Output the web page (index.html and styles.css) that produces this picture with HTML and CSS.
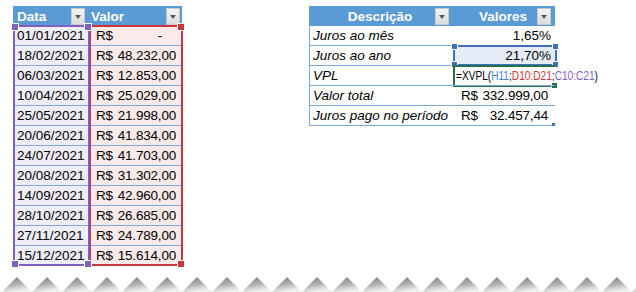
FILE: index.html
```html
<!DOCTYPE html>
<html>
<head>
<meta charset="utf-8">
<link rel="stylesheet" href="styles.css">
</head>
<body>
<div class="page">
  <div class="sheet">
    <div class="ltbl">
      <div class="h h-data"><span>Data</span><i class="dd"></i></div>
      <div class="h h-valor"><span>Valor</span><i class="dd"></i></div>

      <div class="c d">01/01/2021</div><div class="c v"><span>R$</span><span class="dash">-</span></div>
      <div class="c d">18/02/2021</div><div class="c v"><span>R$</span><span>48.232,00</span></div>
      <div class="c d">06/03/2021</div><div class="c v"><span>R$</span><span>12.853,00</span></div>
      <div class="c d">10/04/2021</div><div class="c v"><span>R$</span><span>25.029,00</span></div>
      <div class="c d">25/05/2021</div><div class="c v"><span>R$</span><span>21.998,00</span></div>
      <div class="c d">20/06/2021</div><div class="c v"><span>R$</span><span>41.834,00</span></div>
      <div class="c d">24/07/2021</div><div class="c v"><span>R$</span><span>41.703,00</span></div>
      <div class="c d">20/08/2021</div><div class="c v"><span>R$</span><span>31.302,00</span></div>
      <div class="c d">14/09/2021</div><div class="c v"><span>R$</span><span>42.960,00</span></div>
      <div class="c d">28/10/2021</div><div class="c v"><span>R$</span><span>26.685,00</span></div>
      <div class="c d">27/11/2021</div><div class="c v"><span>R$</span><span>24.789,00</span></div>
      <div class="c d">15/12/2021</div><div class="c v"><span>R$</span><span>15.614,00</span></div>

      <div class="sel sel-red">
        <i class="hd hd-tr red"></i><i class="hd hd-br red"></i>
      </div>
      <div class="sel sel-purple">
        <i class="hd hd-tl purple"></i><i class="hd hd-tr purple"></i>
        <i class="hd hd-bl purple"></i><i class="hd hd-br purple"></i>
      </div>
    </div>

    <div class="rtbl">
      <div class="h h-c"><i class="sp"></i><span>Descrição</span><i class="dd"></i></div>
      <div class="h h-c"><i class="sp"></i><span>Valores</span><i class="dd"></i></div>

      <div class="c k">Juros ao mês</div><div class="c n">1,65%</div>
      <div class="c k">Juros ao ano</div><div class="c n h11">21,70%</div>
      <div class="c k">VPL</div><div class="c f"><span class="ftext">=XVPL(<span class="rb">H11</span>;<span class="rr">D10:D21</span>;<span class="rp">C10:C21</span>)</span></div>
      <div class="c k">Valor total</div><div class="c acc"><span>R$</span><span>332.999,00</span></div>
      <div class="c k">Juros pago no período</div><div class="c acc"><span>R$</span><span>32.457,44</span></div>

      <div class="sel sel-blue">
        <i class="hd hd-tl blue"></i><i class="hd hd-tr blue"></i>
        <i class="hd hd-bl blue"></i><i class="hd hd-br blue"></i>
      </div>
      <div class="sel sel-green"><i class="hd hd-br green"></i></div>
      <i class="resize"></i>
    </div>
  </div>

  <svg class="zig" width="636" height="17" viewBox="0 0 636 17">
    <defs>
      <linearGradient id="g" x1="0" y1="0" x2="0.35" y2="1">
        <stop offset="0" stop-color="#7a7a7a"/>
        <stop offset="0.55" stop-color="#adadad"/>
        <stop offset="1" stop-color="#efefef"/>
      </linearGradient>
      <pattern id="tri" width="30" height="17" patternUnits="userSpaceOnUse" x="2" y="0">
        <polygon points="0,17 15,2 30,17" fill="url(#g)"/>
      </pattern>
    </defs>
    <rect x="0" y="0" width="636" height="17" fill="url(#tri)"/>
  </svg>
</div>
</body>
</html>
```
FILE: styles.css
```css
html, body {
  margin: 0;
  padding: 0;
  background: #ffffff;
}

body {
  width: 636px;
  height: 292px;
  overflow: hidden;
  font-family: "Liberation Sans", Arial, sans-serif;
  font-size: 13.5px;
  color: #000;
}

.page {
  display: flex;
  flex-direction: column;
  height: 292px;
}

.sheet {
  display: flex;
  align-items: flex-start;
  gap: 127px;
  padding: 6px 0 0 13px;
  height: 269px;
  box-sizing: border-box;
}

.zig {
  display: block;
  margin-top: 6px;
}

/* headers */
.h {
  height: 20px;
  background: #5b9bd5;
  color: #fff;
  font-weight: bold;
  display: flex;
  align-items: center;
  box-sizing: border-box;
}

.dd {
  display: block;
  width: 14px;
  height: 17px;
  box-sizing: border-box;
  border: 1px solid #c9c9c9;
  background: linear-gradient(180deg, #f4f4f4, #dcdcdc);
  position: relative;
}

.dd::after {
  content: "";
  position: absolute;
  left: 3px;
  top: 6px;
  border-left: 3.5px solid transparent;
  border-right: 3.5px solid transparent;
  border-top: 4px solid #595959;
}

/* left table */
.ltbl {
  display: grid;
  grid-template-columns: 76px 93px;
  grid-auto-rows: 20px;
  position: relative;
}

.h-data {
  padding: 0 4px 0 4px;
  justify-content: space-between;
}

.h-valor {
  padding: 0 2px 0 2px;
  justify-content: space-between;
}

.c {
  height: 20px;
  box-sizing: border-box;
  border-bottom: 1px solid #7ea8dc;
  display: flex;
  align-items: center;
  white-space: nowrap;
}

.d {
  background: #efedf8;
  padding-left: 4px;
}

.v {
  background: #fbeaea;
  padding: 0 6px 0 7px;
  justify-content: space-between;
  letter-spacing: -0.2px;
}

.v .dash {
  padding-right: 14px;
}

.sel {
  position: absolute;
  box-sizing: border-box;
}

.sel-purple {
  left: 0;
  top: 19px;
  width: 77px;
  height: 241px;
  border: 2px solid #7f5fbf;
}

.sel-red {
  left: 76px;
  top: 19px;
  width: 94px;
  height: 241px;
  border: 2px solid #c8353d;
}

.hd {
  position: absolute;
  width: 6px;
  height: 6px;
}

.hd-tl { left: -4px; top: -4px; }
.hd-tr { right: -4px; top: -4px; }
.hd-bl { left: -4px; bottom: -4px; }
.hd-br { right: -4px; bottom: -4px; }

.purple { background: #7f5fbf; border: 1px solid #fff; }
.red { background: #c8353d; border: 1px solid #fff; }
.blue { background: #3f6fc0; border: 1px solid #fff; width: 5px; height: 5px; }
.green { background: #217346; border: 1px solid #fff; width: 5px; height: 5px; }

/* right table */
.rtbl {
  display: grid;
  grid-template-columns: 144px 102px;
  grid-auto-rows: 20px;
  position: relative;
}

.h-c {
  display: grid;
  grid-template-columns: 16px 1fr 16px;
  align-items: center;
  padding-right: 2px;
}

.h-c span {
  text-align: center;
}

.k {
  font-style: italic;
  padding-left: 3px;
  border-left: 1px solid #7ea8dc;
}

.n {
  justify-content: flex-end;
  padding-right: 4px;
}

.h11 {
  background: #e4ecf8;
}

.acc {
  justify-content: space-between;
  padding: 0 7px 0 8px;
  letter-spacing: -0.2px;
}

.f {
  padding-left: 3px;
  overflow: visible;
  position: relative;
  z-index: 2;
}

.ftext {
  display: inline-block;
  font-size: 13.5px;
  transform: scaleX(0.75);
  transform-origin: 0 50%;
}

.rb { color: #3f7fd0; }
.rr { color: #c8353d; }
.rp { color: #7f5fbf; }

.sel-blue {
  left: 144px;
  top: 39px;
  width: 104px;
  height: 21px;
  border: 2px solid #3f6fc0;
}

.sel-green {
  left: 144px;
  top: 59px;
  width: 102px;
  height: 22px;
  border: 2px solid #217346;
  border-right: none;
}

.sel-green .hd-br {
  right: -3px;
  bottom: -4px;
}

.resize {
  position: absolute;
  right: 0;
  bottom: 0;
  width: 3px;
  height: 3px;
  background: #3f6fc0;
}
```
